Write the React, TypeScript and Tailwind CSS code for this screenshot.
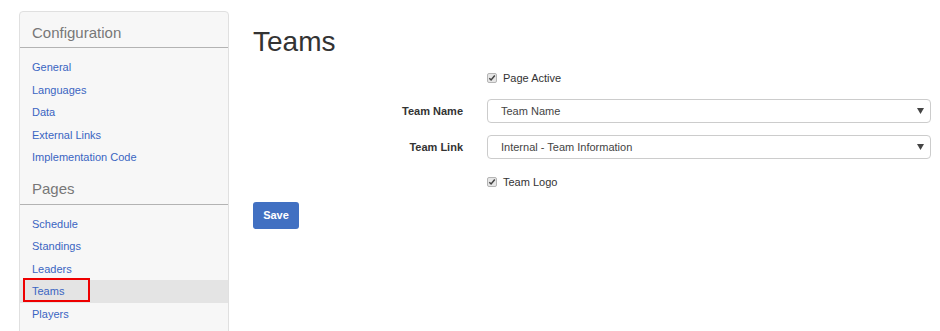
import React from 'react';

const configLinks = ['General', 'Languages', 'Data', 'External Links', 'Implementation Code'];
const pageLinks = ['Schedule', 'Standings', 'Leaders', 'Teams', 'Players'];

const Check: React.FC<{ label: string }> = ({ label }) => (
  <div className="flex items-center gap-[6px]">
    <span className="w-[10px] h-[10px] rounded-[2px] border border-[#b5b5b5] bg-[#e6e6e6] flex items-center justify-center">
      <svg width="8" height="8" viewBox="0 0 8 8">
        <path d="M1.3 4.2 L3.1 6 L6.8 1.6" fill="none" stroke="#444" strokeWidth="1.5" />
      </svg>
    </span>
    <span className="text-[11px] text-[#333]">{label}</span>
  </div>
);

const Select: React.FC<{ value: string }> = ({ value }) => (
  <div className="h-[24px] w-[444px] border border-[#ccc] rounded-[4px] bg-white flex items-center justify-between pl-[13px] pr-[6px]">
    <span className="text-[11px] text-[#444]">{value}</span>
    <svg width="7" height="6" viewBox="0 0 7 6">
      <path d="M0 0 H7 L3.5 6 Z" fill="#444" />
    </svg>
  </div>
);

const NavGroup: React.FC<{ title: string; links: string[]; active?: string; pad: string }> = ({ title, links, active, pad }) => (
  <div>
    <div className={`${pad} pl-[12px] border-b border-[#b3b3b3] text-[15px] leading-[16px] text-[#777]`}>{title}</div>
    <div className="pt-[8px]">
      {links.map(l => (
        <div key={l} className={`relative h-[22.5px] flex items-center pl-[12px] text-[11px] text-[#3a65c2] ${l === active ? 'bg-[#e4e4e4]' : ''}`}>
          {l}
          {l === active && (
            <span className="absolute left-[3px] top-[-2px] w-[67px] h-[24px] border-2 border-[#ee0000]" />
          )}
        </div>
      ))}
    </div>
  </div>
);

const App: React.FC = () => {
  return (
    <div className="w-[940px] h-[331px] overflow-hidden bg-white flex pl-[19px] pt-[11px]" style={{ fontFamily: '"Liberation Sans", Arial, sans-serif' }}>
      <div className="w-[210px] h-[340px] shrink-0 bg-[#f7f7f7] border border-[#e0e0e0] rounded-[4px]">
        <NavGroup title="Configuration" links={configLinks} pad="pt-[13px] pb-[6px]" />
        <NavGroup title="Pages" links={pageLinks} active="Teams" pad="pt-[12px] pb-[7px]" />
      </div>

      <div className="ml-[24px] flex flex-col">
        <h1 className="text-[28px] leading-[32px] text-[#333] mt-[15px]">Teams</h1>

        <div className="mt-[12px] flex flex-col">
          <div className="flex items-center h-[16px]">
            <div className="w-[210px]" />
            <div className="ml-[24px]"><Check label="Page Active" /></div>
          </div>
          <div className="flex items-center mt-[13px]">
            <div className="w-[210px] text-right text-[11px] font-bold text-[#333]">Team Name</div>
            <div className="ml-[24px]"><Select value="Team Name" /></div>
          </div>
          <div className="flex items-center mt-[12px]">
            <div className="w-[210px] text-right text-[11px] font-bold text-[#333]">Team Link</div>
            <div className="ml-[24px]"><Select value="Internal - Team Information" /></div>
          </div>
          <div className="flex items-center h-[16px] mt-[15px]">
            <div className="w-[210px]" />
            <div className="ml-[24px]"><Check label="Team Logo" /></div>
          </div>
        </div>

        <button className="mt-[12px] w-[46px] h-[27px] rounded-[3px] bg-[#4170c2] text-white text-[11px] font-bold">Save</button>
      </div>
    </div>
  );
};

export default App;
